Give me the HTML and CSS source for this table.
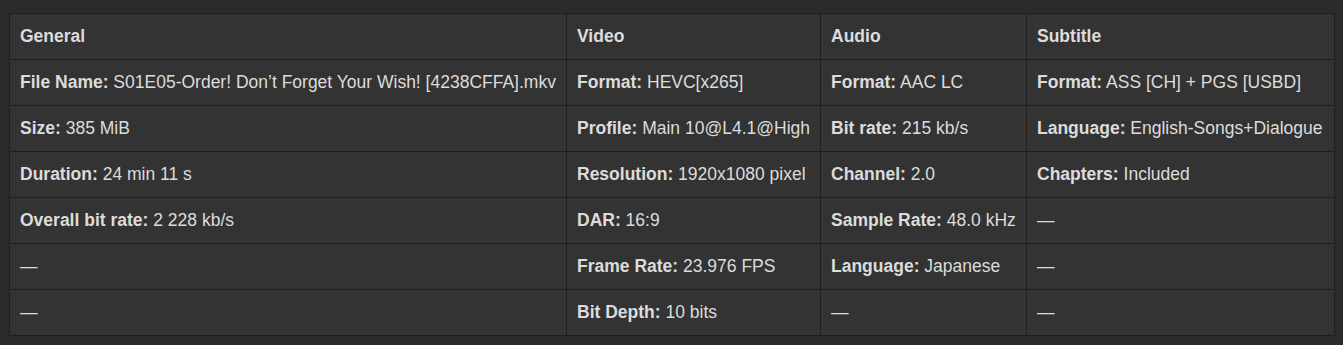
FILE: index.html
```html
<!DOCTYPE html>
<html>
<head>
<meta charset="utf-8">
<link rel="stylesheet" href="styles.css">
</head>
<body>
<table class="info">
  <colgroup>
    <col class="c1"><col class="c2"><col class="c3"><col class="c4">
  </colgroup>
  <thead>
    <tr><th>General</th><th>Video</th><th>Audio</th><th>Subtitle</th></tr>
  </thead>
  <tbody>
    <tr>
      <td><b>File Name:</b> S01E05-Order! Don’t Forget Your Wish! [4238CFFA].mkv</td>
      <td><b>Format:</b> HEVC[x265]</td>
      <td><b>Format:</b> AAC LC</td>
      <td><b>Format:</b> ASS [CH] + PGS [USBD]</td>
    </tr>
    <tr>
      <td><b>Size:</b> 385 MiB</td>
      <td><b>Profile:</b> Main 10@L4.1@High</td>
      <td><b>Bit rate:</b> 215 kb/s</td>
      <td><b>Language:</b> English-Songs+Dialogue</td>
    </tr>
    <tr>
      <td><b>Duration:</b> 24 min 11 s</td>
      <td><b>Resolution:</b> 1920x1080 pixel</td>
      <td><b>Channel:</b> 2.0</td>
      <td><b>Chapters:</b> Included</td>
    </tr>
    <tr>
      <td><b>Overall bit rate:</b> 2 228 kb/s</td>
      <td><b>DAR:</b> 16:9</td>
      <td><b>Sample Rate:</b> 48.0 kHz</td>
      <td>—</td>
    </tr>
    <tr>
      <td>—</td>
      <td><b>Frame Rate:</b> 23.976 FPS</td>
      <td><b>Language:</b> Japanese</td>
      <td>—</td>
    </tr>
    <tr>
      <td>—</td>
      <td><b>Bit Depth:</b> 10 bits</td>
      <td>—</td>
      <td>—</td>
    </tr>
  </tbody>
</table>
</body>
</html>
```
FILE: styles.css
```css
html, body {
  background: #2b2b2b;
}
body {
  margin: 0;
  padding: 13px 9px;
  font-family: "Liberation Sans", Arial, sans-serif;
  font-size: 17.5px;
  color: #dcdcdc;
}
.info {
  border-collapse: collapse;
  table-layout: fixed;
  width: 1325px;
  background: #333333;
}
.c1 { width: 557px; }
.c2 { width: 254px; }
.c3 { width: 206px; }
.c4 { width: 308px; }
.info th, .info td {
  border: 1px solid #1e1e1e;
  height: 46px;
  box-sizing: border-box;
  padding: 0 10px 2px;
  text-align: left;
  white-space: nowrap;
  line-height: 20px;
  vertical-align: middle;
}
.info th { font-weight: bold; }
.info b { font-weight: bold; }
```
